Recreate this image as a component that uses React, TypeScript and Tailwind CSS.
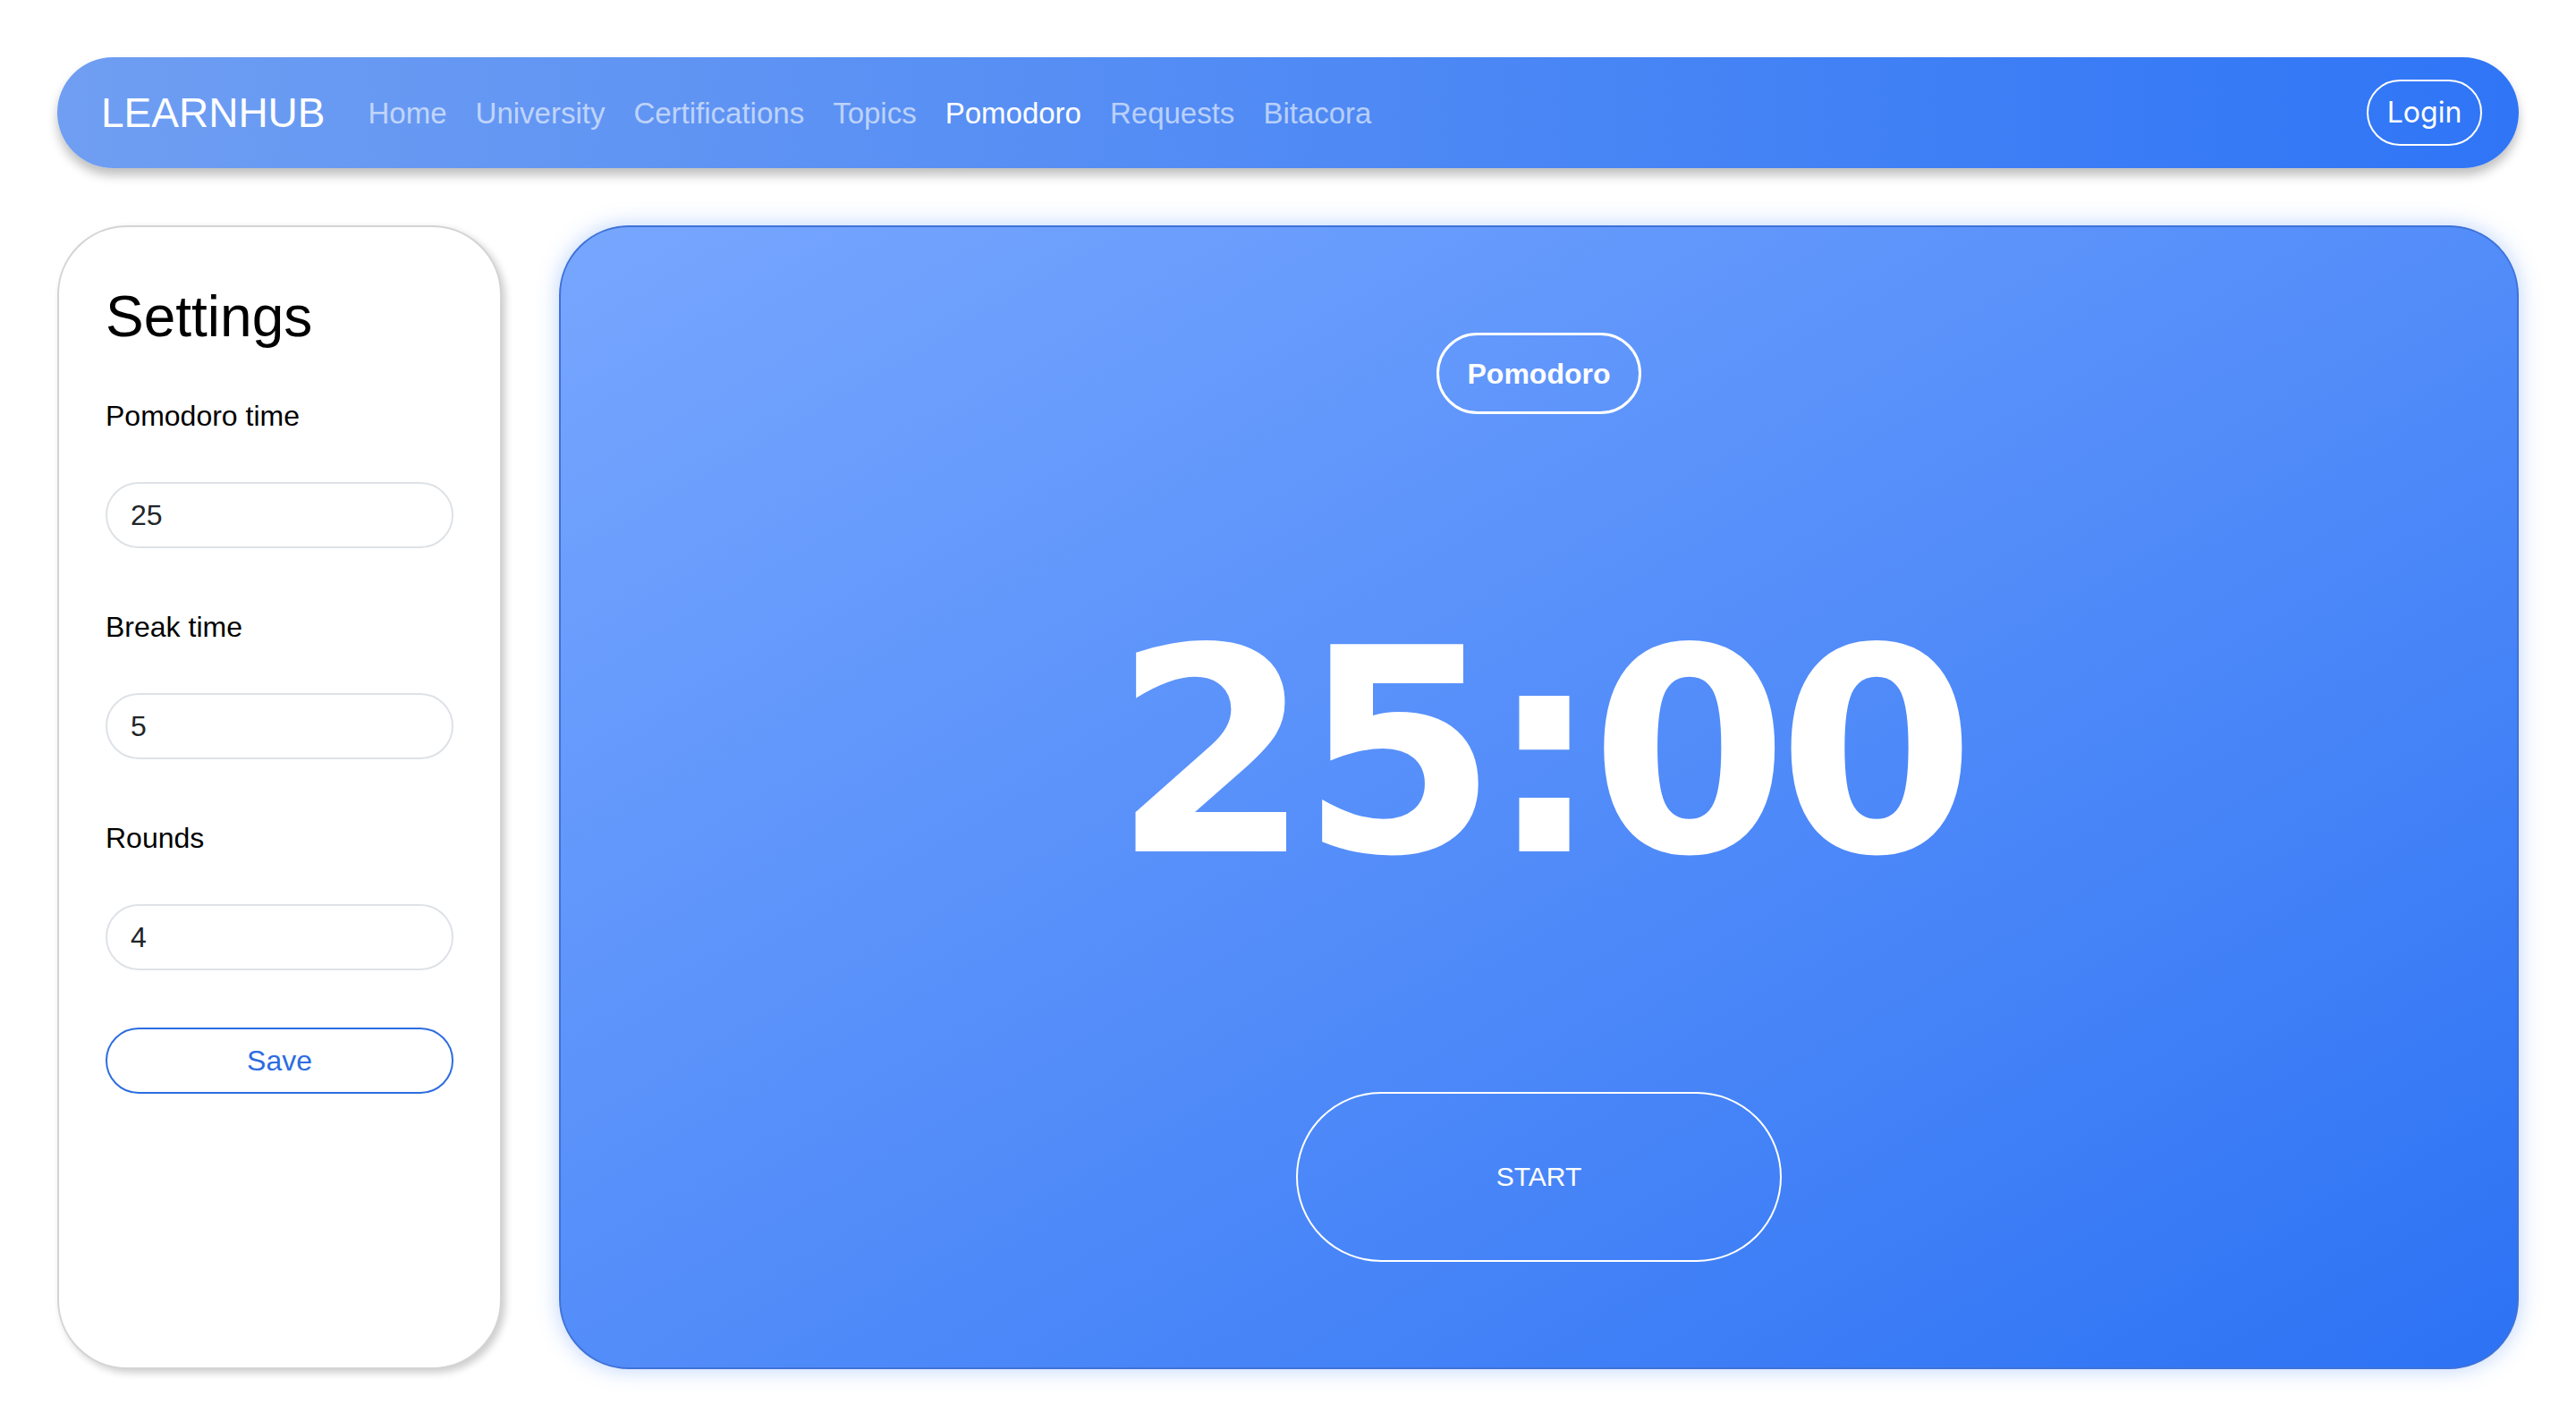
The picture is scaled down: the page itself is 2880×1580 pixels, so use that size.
import React from "react";

const links = ["Home", "University", "Certifications", "Topics", "Pomodoro", "Requests", "Bitacora"];

function Field({ label, value }: { label: string; value: string }) {
  return (
    <div className="flex flex-col">
      <div className="text-[32px] leading-[48px] text-black mb-[50px]">{label}</div>
      <input
        type="text"
        defaultValue={value}
        className="h-[74px] w-full rounded-full border-2 border-[#dee2e6] bg-white pl-[26px] text-[32px] text-[#212529] outline-none"
        style={{ fontFamily: '"Liberation Sans", Arial, sans-serif' }}
      />
    </div>
  );
}

export default function App() {
  return (
    <div
      className="w-[2880px] h-[1580px] bg-white px-[64px] pt-[64px] overflow-hidden"
      style={{ fontFamily: '"Liberation Sans", Arial, sans-serif' }}
    >
      <nav className="h-[124px] rounded-full bg-linear-to-r from-[#6f9ef2] to-[#2f75f6] shadow-[0_8px_12px_rgba(0,0,0,0.25)] flex items-center pl-[49px] pr-[41px]">
        <div className="text-[46px] leading-none text-white">LEARNHUB</div>
        <div className="flex items-center gap-[32px] ml-[48px]">
          {links.map((l) => (
            <a
              key={l}
              className={
                "text-[33px] leading-none " +
                (l === "Pomodoro" ? "text-white" : "text-white/60")
              }
            >
              {l}
            </a>
          ))}
        </div>
        <div className="flex-1" />
        <button
          className="h-[74px] w-[129px] rounded-full border-2 border-white text-white text-[32px] leading-none flex items-center justify-center"
          style={{ fontFamily: "Inter, sans-serif" }}
        >
          Login
        </button>
      </nav>

      <div className="mt-[64px] flex gap-[64px] h-[1279px]">
        <aside className="w-[497px] shrink-0 h-full rounded-[78px] border-2 border-[#d4d4d4] bg-white shadow-[4px_4px_8px_rgba(0,0,0,0.2)] px-[52px] pt-[52px]">
          <h1 className="text-[64px] leading-[96px] text-black mb-[39px]">Settings</h1>
          <div className="flex flex-col gap-[64px]">
            <Field label="Pomodoro time" value="25" />
            <Field label="Break time" value="5" />
            <Field label="Rounds" value="4" />
            <button className="h-[74px] w-full rounded-full border-2 border-[#2d6de0] text-[#2d6de0] text-[32px] leading-none bg-white">
              Save
            </button>
          </div>
        </aside>

        <main className="flex-1 h-full rounded-[78px] border-2 border-[#3f72d8] bg-linear-to-br from-[#77a6fe] to-[#2c72f4] shadow-[0_0_24px_rgba(59,130,246,0.35)] flex flex-col items-center justify-between py-[118px]">
          <div className="w-[229px] h-[91px] rounded-full border-[3px] border-white flex items-center justify-center text-white text-[32px] font-bold leading-none">
            Pomodoro
          </div>
          <div
            className="text-white font-bold text-[318px] leading-none tracking-[-12px]"
            style={{ fontFamily: '"DejaVu Sans", sans-serif' }}
          >
            25:00
          </div>
          <button className="w-[543px] h-[190px] rounded-full border-2 border-white text-white text-[30px] leading-none">
            START
          </button>
        </main>
      </div>
    </div>
  );
}
